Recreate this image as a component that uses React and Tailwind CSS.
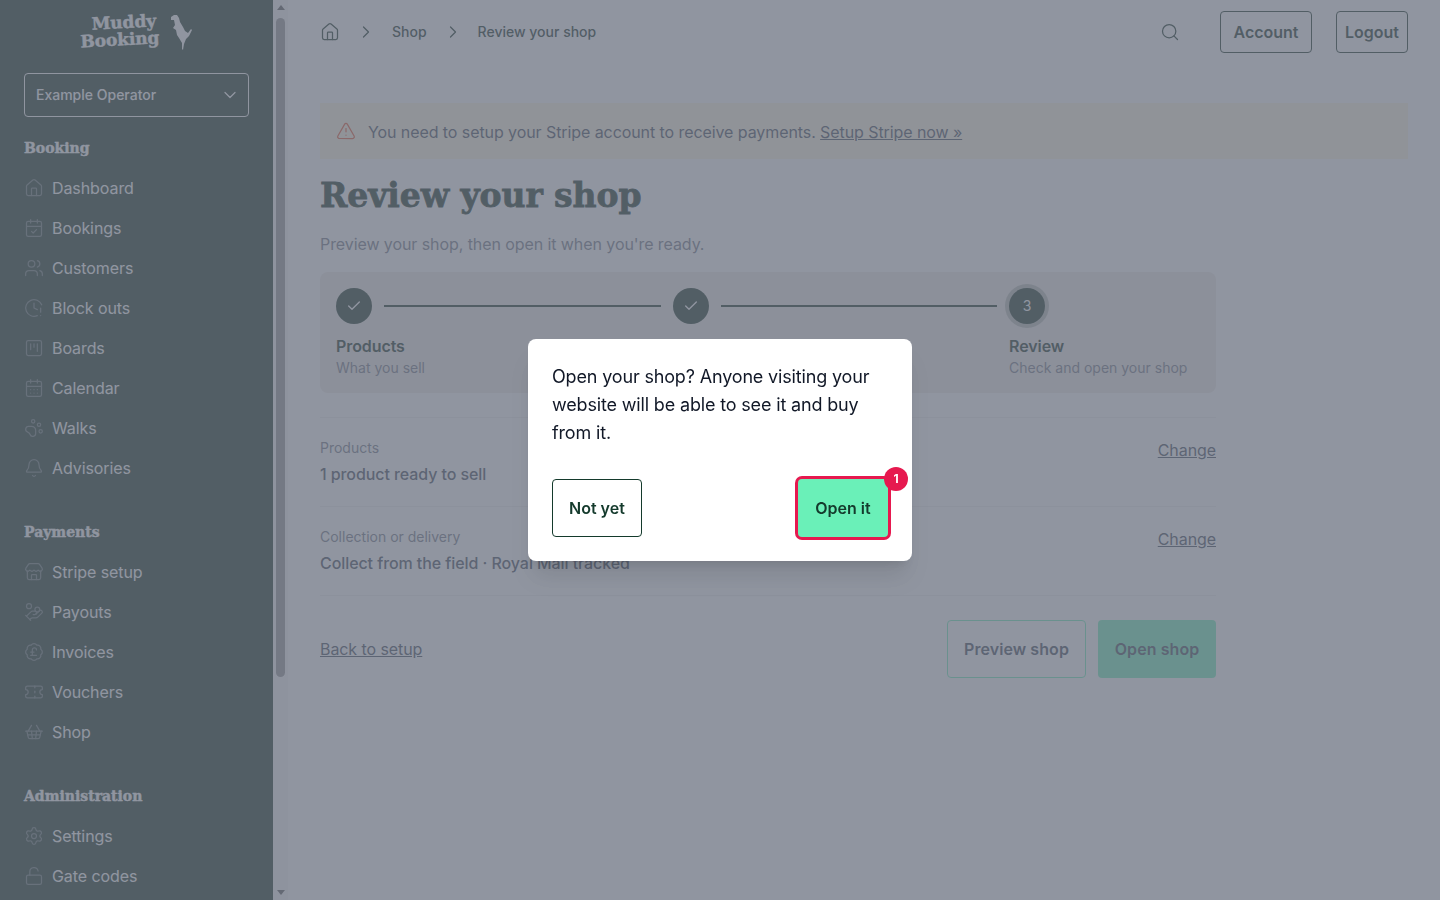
import React from 'react';
import {
  House, CalendarCheck, Users, ClockAlert, SquareKanban, CalendarDays, PawPrint, Bell,
  Store, HandCoins, BadgePoundSterling, Ticket, ShoppingBasket, Settings, LockOpen,
  ChevronDown, ChevronRight, Search, TriangleAlert, Check,
} from 'lucide-react';

const navGroups = [
  {
    title: 'Booking',
    items: [
      ['Dashboard', House],
      ['Bookings', CalendarCheck],
      ['Customers', Users],
      ['Block outs', ClockAlert],
      ['Boards', SquareKanban],
      ['Calendar', CalendarDays],
      ['Walks', PawPrint],
      ['Advisories', Bell],
    ],
  },
  {
    title: 'Payments',
    items: [
      ['Stripe setup', Store],
      ['Payouts', HandCoins],
      ['Invoices', BadgePoundSterling],
      ['Vouchers', Ticket],
      ['Shop', ShoppingBasket],
    ],
  },
  {
    title: 'Administration',
    items: [
      ['Settings', Settings],
      ['Gate codes', LockOpen],
    ],
  },
];

const serif = "font-['DejaVu_Serif',serif]";

const Logo = () => (
  <div className="h-[73px] flex items-start justify-center pt-[14px]">
    <div className={`${serif} -rotate-[3deg] w-[93px] font-bold text-[17px] leading-[17px] [-webkit-text-stroke:0.4px_white] whitespace-nowrap`}>
      <div className="pl-[12px]">Muddy</div>
      <div>Booking</div>
    </div>
    <svg viewBox="170 15 25 38" className="w-[25px] h-[38px] -ml-[4px] -mt-[1px]" fill="white">
      <path d="M172 19 L175 17 L178 17 L180 20 L181 24 L184 29 L186 33 L189 35 L192 31 L193 32 L190 38 L187 41 L185 46 L184 52 L183 51 L183 45 L180 40 L178 37 L177 32 L174 30 L176 27 L175 22 L172 22 Z" />
    </svg>
  </div>
);

const Sidebar = () => (
  <aside className="w-[273px] shrink-0 h-screen overflow-hidden bg-[#082416] text-white">
    <Logo />
    <div className="mx-6 w-[225px] h-[44px] border border-white rounded flex items-center justify-between pl-[11px] pr-2 text-sm font-medium tracking-normal">
      <span>Example Operator</span>
      <ChevronDown size={20} strokeWidth={1.5} />
    </div>
    <div className="mt-[21px] px-6">
      {navGroups.map((group) => (
        <div key={group.title} className="mb-[34px]">
          <div className={`${serif} h-[20px] leading-[20px] text-[14px] font-bold [-webkit-text-stroke:0.4px_white] tracking-normal`}>{group.title}</div>
          <div className="mt-[10px]">
            {group.items.map(([label, Icon]) => (
              <div key={label} className="h-[40px] flex items-center gap-2 text-base">
                <Icon size={20} strokeWidth={1.5} className="text-[#5f6f6c]" />
                <span>{label}</span>
              </div>
            ))}
          </div>
        </div>
      ))}
    </div>
  </aside>
);

const Scrollbar = () => (
  <div className="w-[15px] shrink-0 h-screen bg-[#f8f8f8] flex flex-col items-center justify-between py-[5px] relative">
    <div className="w-0 h-0 border-x-[4px] border-x-transparent border-b-[5px] border-b-[#505050]" />
    <div className="absolute top-[18px] left-[3px] w-[9px] h-[659px] rounded-full bg-[#909090]" />
    <div className="w-0 h-0 border-x-[4px] border-x-transparent border-t-[5px] border-t-[#505050]" />
  </div>
);

const Step = ({ done, number, title, text, last }) => (
  <div className={last ? 'w-[191px] shrink-0' : 'flex-1'}>
    <div className="flex items-center">
      <div className={`w-9 h-9 rounded-full bg-[#082416] text-white flex items-center justify-center text-sm ${last ? 'ring-4 ring-[#082416]/25' : ''}`}>
        {done ? <Check size={16} strokeWidth={2} /> : number}
      </div>
      {!last && <div className="flex-1 h-0.5 bg-[#082416] mx-3" />}
    </div>
    <div className="mt-[13px] text-base leading-[18px] font-semibold text-[#082416]">{title}</div>
    <div className="mt-[3px] text-sm leading-5 text-[#6b7280] tracking-normal">{text}</div>
  </div>
);

const Row = ({ label, value }) => (
  <div className="border-b border-[#f0efef] h-[89px] flex justify-between pt-[20px]">
    <div>
      <div className="text-sm leading-5 text-[#6b7280] tracking-normal">{label}</div>
      <div className="mt-1 text-base leading-6 font-medium text-[#374151]">{value}</div>
    </div>
    <a className="text-base leading-6 underline text-[#374151]">Change</a>
  </div>
);

const Main = () => (
  <main className="flex-1 h-screen overflow-hidden px-8 text-[#082416]">
    <header className="h-[64px] flex items-center">
      <House size={20} strokeWidth={1.5} />
      <ChevronRight size={20} strokeWidth={1.5} className="ml-4" />
      <span className="ml-4 text-sm font-medium tracking-normal">Shop</span>
      <ChevronRight size={20} strokeWidth={1.5} className="ml-4" />
      <span className="ml-[15px] text-sm font-medium tracking-normal">Review your shop</span>
      <Search size={20} strokeWidth={1.5} className="ml-auto" />
      <button className="ml-10 h-[42px] w-[92px] border border-[#082416] rounded font-semibold text-base tracking-normal">Account</button>
      <button className="ml-6 h-[42px] w-[72px] border border-[#082416] rounded font-semibold text-base tracking-normal">Logout</button>
    </header>

    <div className="mt-[39px] h-[56px] bg-[#fff7e0] flex items-center gap-3 px-4 text-base text-[#374151]">
      <TriangleAlert size={20} strokeWidth={1.5} className="text-[#e8502a]" />
      <p className="mt-[1px]">You need to setup your Stripe account to receive payments. <a className="underline">Setup Stripe now »</a></p>
    </div>

    <h1 className={`${serif} mt-[14px] text-[33px] leading-[46px] font-bold [-webkit-text-stroke:0.8px_#082416]`}>Review your shop</h1>
    <p className="mt-[13px] text-base leading-6 text-[#6b7280]">Preview your shop, then open it when you're ready.</p>

    <div className="max-w-4xl">
      <div className="mt-4 h-[121px] bg-[#eeeae5] rounded-lg p-4 flex">
        <Step done title="Products" text="What you sell" />
        <Step done title="Delivery" text="How orders reach people" />
        <Step last number={3} title="Review" text="Check and open your shop" />
      </div>

      <div className="mt-[24px] border-t border-[#f0efef]">
        <Row label="Products" value="1 product ready to sell" />
        <Row label="Collection or delivery" value="Collect from the field · Royal Mail tracked" />
      </div>

      <div className="mt-6 flex items-center justify-between">
        <a className="underline text-base text-[#374151]">Back to setup</a>
        <div className="flex gap-3">
          <button className="h-[58px] w-[139px] border border-[#6af0b8] rounded font-semibold text-base text-[#374151] tracking-[0.08px]">Preview shop</button>
          <button className="h-[58px] w-[118px] bg-[#6af0b8] rounded font-semibold text-base text-[#374151] tracking-[0.08px]">Open shop</button>
        </div>
      </div>
    </div>
  </main>
);

const Modal = () => (
  <div className="fixed inset-0 bg-[#6b7280]/75 flex items-center justify-center">
    <div className="w-[384px] bg-white rounded-lg shadow-xl p-6">
      <p className="text-lg leading-7 text-[#111827] tracking-[-0.16px]">Open your shop? Anyone visiting your website will be able to see it and buy from it.</p>
      <div className="mt-8 flex justify-between">
        <button className="h-[58px] px-4 border border-[#143a2c] rounded font-semibold text-base text-[#143a2c] tracking-normal">Not yet</button>
        <div className="relative">
          <button className="h-[58px] w-[90px] bg-[#6af0b8] rounded font-semibold text-base text-[#143a2c] ring-3 ring-[#e6194f] tracking-normal">Open it</button>
          <span className="absolute -top-3 -right-5 w-6 h-6 rounded-full bg-[#e6194f] text-white text-xs font-bold flex items-center justify-center">1</span>
        </div>
      </div>
    </div>
  </div>
);

export default function App() {
  return (
    <div className="flex h-screen overflow-hidden bg-white font-['Inter',sans-serif] tracking-[-0.08px]">
      <Sidebar />
      <Scrollbar />
      <Main />
      <Modal />
    </div>
  );
}
